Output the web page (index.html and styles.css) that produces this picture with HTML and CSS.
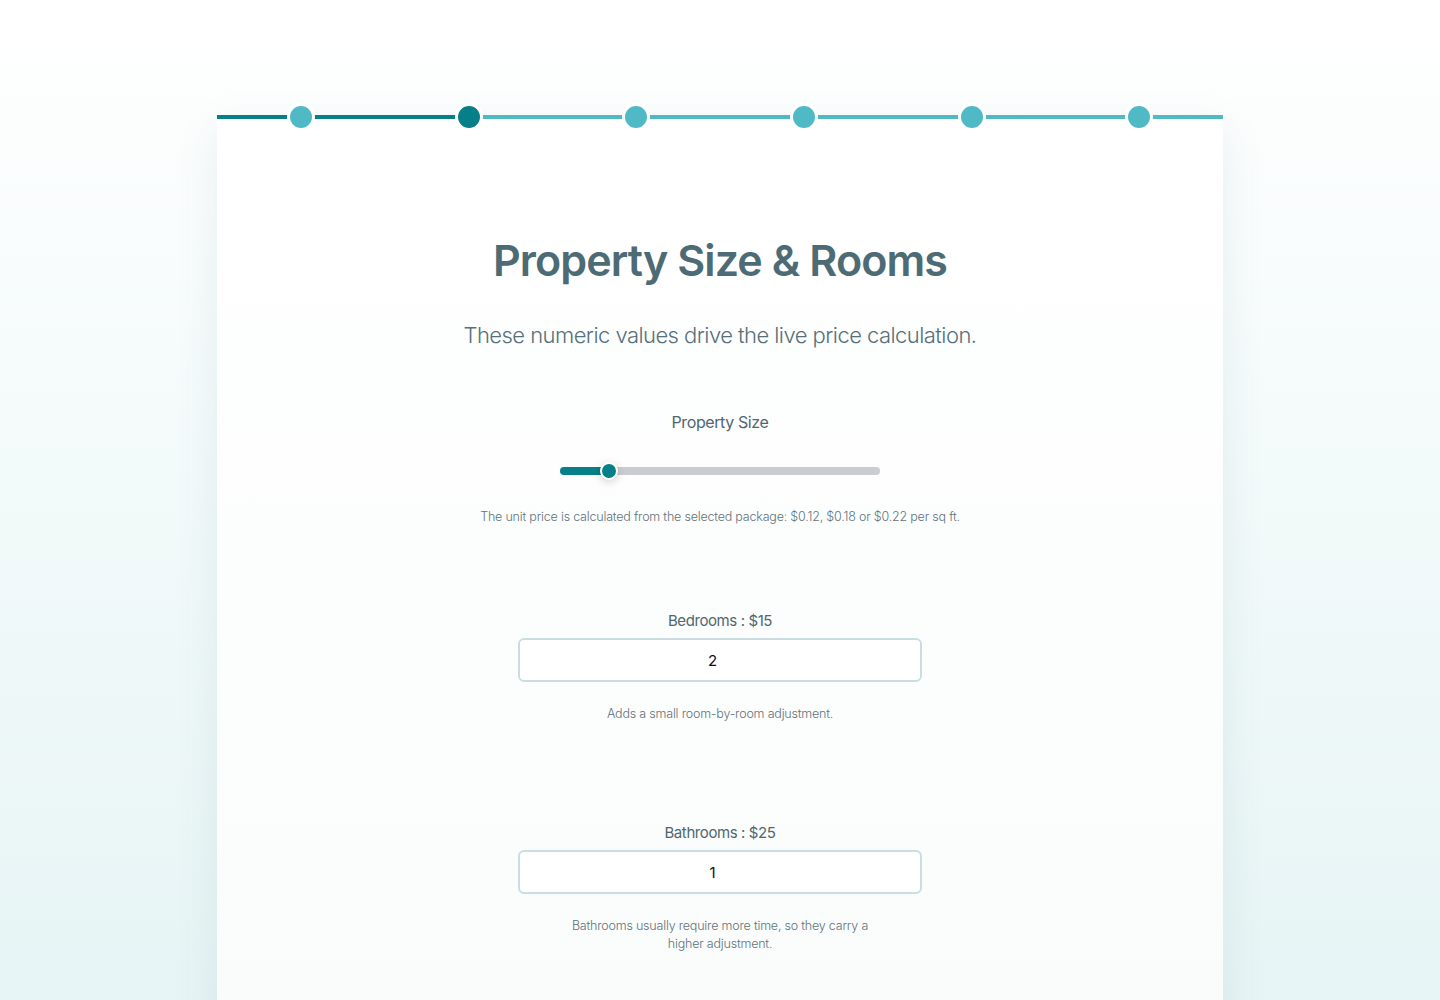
FILE: index.html
```html
<!DOCTYPE html>
<html>
<head>
  <title>Property Size &amp; Rooms</title>
  <link rel="stylesheet" href="styles.css">
</head>
<body>
  <div class="wizard">
    <div class="steps">
      <div class="step done"><span class="dot"></span></div>
      <div class="step current"><span class="dot"></span></div>
      <div class="step"><span class="dot"></span></div>
      <div class="step"><span class="dot"></span></div>
      <div class="step"><span class="dot"></span></div>
      <div class="step"><span class="dot"></span></div>
    </div>

    <div class="card">
      <h1>Property Size &amp; Rooms</h1>
      <p class="lead">These numeric values drive the live price calculation.</p>

      <div class="field field-size">
        <label for="size">Property Size</label>
        <input type="range" id="size" class="slider" min="500" max="8000" value="1500" style="--fill: 15%">
        <p class="hint">The unit price is calculated from the selected package: $0.12, $0.18 or $0.22 per sq ft.</p>
      </div>

      <div class="field field-bed">
        <label for="bedrooms">Bedrooms : $15</label>
        <input type="number" id="bedrooms" class="count" min="0" value="2">
        <p class="hint">Adds a small room-by-room adjustment.</p>
      </div>

      <div class="field field-bath">
        <label for="bathrooms">Bathrooms : $25</label>
        <input type="number" id="bathrooms" class="count" min="0" value="1">
        <p class="hint narrow">Bathrooms usually require more time, so they carry a higher adjustment.</p>
      </div>
    </div>
  </div>
</body>
</html>
```

FILE: styles.css
```css
body {
  margin: 0;
  min-height: 100vh;
  font-family: Inter, "Noto Sans", sans-serif;
  background: linear-gradient(180deg, #ffffff 0%, #f3fafa 40%, #e2f2f3 100%);
  overflow: hidden;
}

.wizard {
  width: 1006px;
  margin: 115px auto 0;
}

/* progress bar on top of the card */
.steps {
  display: flex;
  position: relative;
  z-index: 1;
}

.step {
  flex: 1;
  height: 4px;
  background: #4fbac6;
  display: flex;
  align-items: center;
  justify-content: center;
}

.step.done {
  background: #077f88;
}

.step.current {
  background: linear-gradient(90deg, #077f88 50%, #4fbac6 50%);
}

.step .dot {
  flex: none;
  width: 22px;
  height: 22px;
  border-radius: 50%;
  border: 3px solid #fff;
  background: #4fbac6;
}

.step.current .dot {
  background: #077f88;
}

.card {
  min-height: 900px;
  padding: 115px 0 60px;
  background: linear-gradient(180deg, #ffffff 0%, #f9fbfb 100%);
  box-shadow: 0 10px 40px rgba(60, 110, 120, 0.10);
  text-align: center;
}

.card h1 {
  margin: 0;
  font-size: 43px;
  line-height: 52px;
  font-weight: 600;
  color: #4c6b74;
  letter-spacing: -0.9px;
}

.lead {
  margin: 34px 0 0;
  font-size: 22px;
  line-height: 30px;
  font-weight: 300;
  color: #56707a;
  letter-spacing: -0.55px;
}

.field {
  display: flex;
  flex-direction: column;
  align-items: center;
}

.field label {
  font-size: 15px;
  line-height: 22px;
  color: #4f6770;
  letter-spacing: -0.4px;
}

.field-size { margin-top: 61px; }
.field-bed { margin-top: 84px; }
.field-bath { margin-top: 99px; }

.field-size label {
  font-size: 16px;
}

.hint {
  margin: 23px 0 0;
  font-size: 12.5px;
  line-height: 18px;
  font-weight: 300;
  color: #5f737b;
  letter-spacing: -0.2px;
}

.hint.narrow {
  max-width: 320px;
}

.field-size .hint {
  margin-top: 33px;
}

/* range slider */
.slider {
  -webkit-appearance: none;
  appearance: none;
  width: 320px;
  height: 8px;
  margin: 34px 0 0;
  border-radius: 4px;
  background: linear-gradient(90deg, #077f88 var(--fill), #c9cdd1 var(--fill));
  outline: none;
}

.slider::-webkit-slider-thumb {
  -webkit-appearance: none;
  width: 18px;
  height: 18px;
  border-radius: 50%;
  background: #077f88;
  border: 2px solid #fff;
  box-shadow: 0 2px 8px rgba(0, 0, 0, 0.18);
  cursor: pointer;
}

/* number inputs */
.count {
  box-sizing: border-box;
  width: 404px;
  height: 44px;
  margin-top: 6px;
  border: 2px solid #c9dde3;
  border-radius: 6px;
  background: #fff;
  font-family: Inter, sans-serif;
  font-size: 15px;
  color: #111;
  text-align: center;
}
```
